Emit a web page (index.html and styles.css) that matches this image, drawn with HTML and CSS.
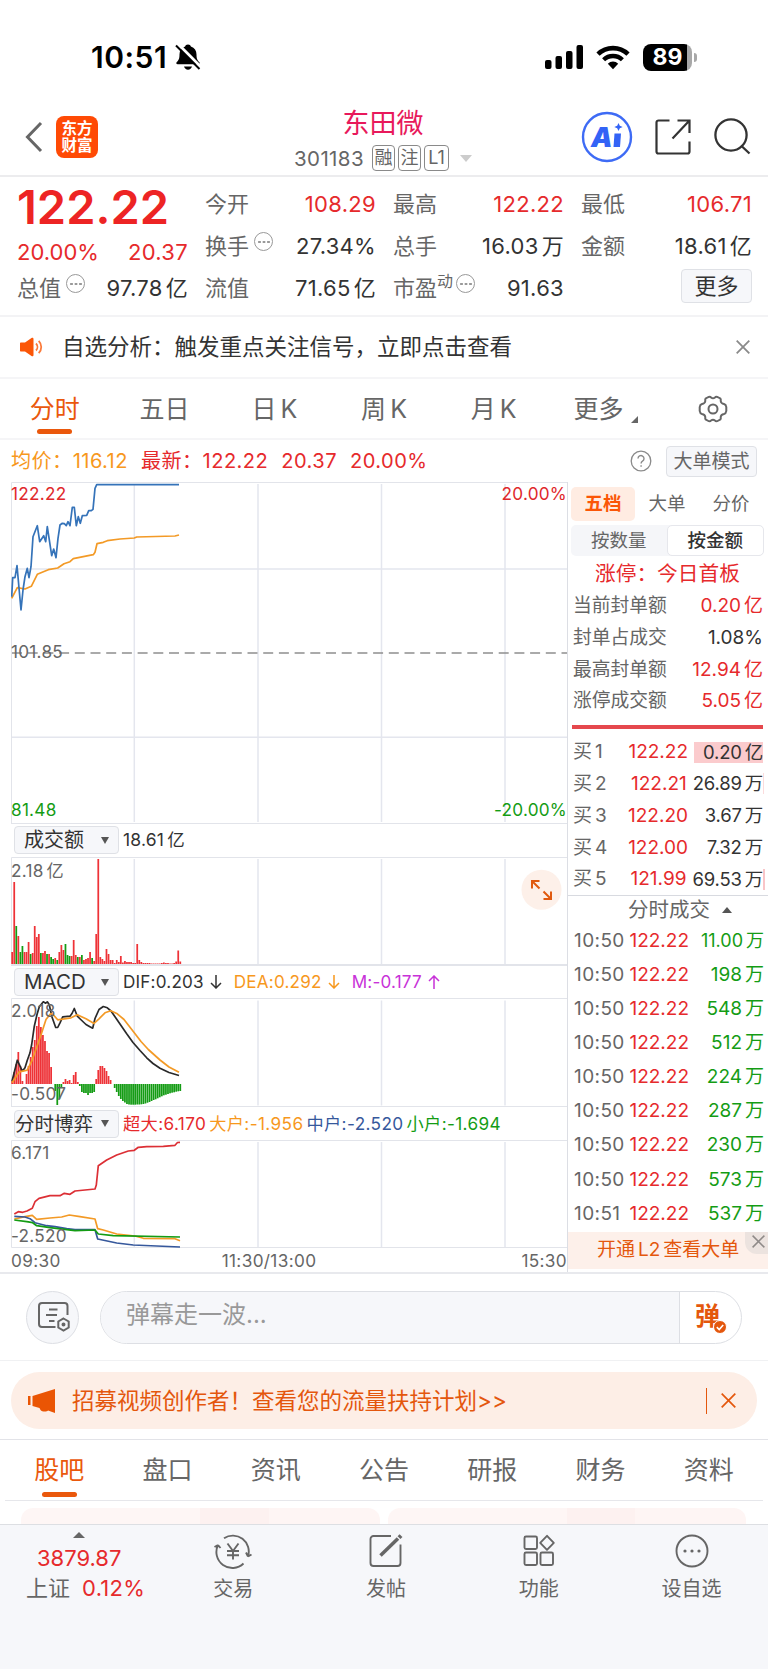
FILE: index.html
```html
<!DOCTYPE html>
<html lang="zh-CN">
<head>
    <meta charset="UTF-8">
    <meta name="viewport" content="width=device-width, initial-scale=1.0">
    <title>东田微 301183</title>
    <link rel="stylesheet" href="styles.css">
</head>
<body>

    <!-- Status bar -->
    <div class="status-bar">
        <div class="status-time">
            <span>10:51</span>
            <svg width="26" height="28" viewBox="0 0 26 28">
                <path d="M13 1.500c1.600 0 2.600.8 2.900 2C19.600 4.600 21.500 7.600 21.500 11.500c0 4.500 1 5.900 2.700 7.500.9.900.6 2.300-.9 2.300H2.700c-1.500 0-1.800-1.400-.9-2.300 1.700-1.600 2.700-3 2.700-7.500 0-3.900 1.900-6.900 5.600-8 .3-1.200 1.300-2 2.900-2z" fill="#000"/>
                <path d="M9 23.500h8c-.6 2-2 3.200-4 3.200s-3.400-1.200-4-3.200z" fill="#000"/>
                <path d="M2.500 .5L26 24" stroke="#fff" stroke-width="3"/>
                <path d="M1 2.500L24.500 26" stroke="#000" stroke-width="2"/>
            </svg>
        </div>
        <div class="status-icons">
            <svg width="38" height="25" viewBox="0 0 38 25">
                <rect x="0" y="15" width="6.500" height="9" rx="2"/>
                <rect x="10.500" y="11" width="6.500" height="13" rx="2"/>
                <rect x="21" y="6" width="6.500" height="18" rx="2"/>
                <rect x="31.500" y="0" width="6.500" height="24" rx="2"/>
            </svg>
            <svg width="34" height="25" viewBox="0 0 34 25">
                <path d="M2 9.200a21.500 21.500 0 0 1 30 0" fill="none" stroke="#000" stroke-width="4.600"/>
                <path d="M7.600 14.800a13.500 13.500 0 0 1 18.800 0" fill="none" stroke="#000" stroke-width="4.300"/>
                <path d="M11.800 18.700a7.500 7.500 0 0 1 10.400 0L17 24.200z"/>
            </svg>
            <div class="battery"><span>89</span></div>
        </div>
    </div>

    <!-- Header -->
    <header class="header">
        <div class="header-left">
            <svg width="18" height="32" viewBox="0 0 18 32"><path d="M16 2L2.500 16 16 30" fill="none" stroke="#666" stroke-width="3"/></svg>
            <div class="logo">东方<br>财富</div>
        </div>
        <div class="header-center">
            <h1>东田微</h1>
            <div class="stock-code">
                <span class="code">301183</span>
                <span class="tag">融</span>
                <span class="tag">注</span>
                <span class="tag tag-l1">L1</span>
                <svg class="code-caret" width="12" height="7" viewBox="0 0 12 7"><path d="M0 0h12L6 7z" fill="#ccc"/></svg>
            </div>
        </div>
        <div class="header-right">
            <svg width="52" height="52" viewBox="0 0 52 52">
                <circle cx="26" cy="26" r="24" fill="#fff" stroke="#3e6bf5" stroke-width="2.400"/>
                <text x="10" y="35.500" class="ai-text">A</text>
                <path d="M33.500 22.500h6.500l-1 13.500h-6.500z" fill="#3363f6"/>
                <path d="M37.500 12l1.300 2.700 2.900 1.300-2.900 1.300L37.500 20l-1.300-2.700-2.900-1.300 2.900-1.300z" fill="#3363f6"/>
            </svg>
            <svg width="36" height="36" viewBox="0 0 36 36" fill="none" stroke="#333" stroke-width="2.200">
                <path d="M14.500 1.500H3.500a2 2 0 0 0-2 2v29a2 2 0 0 0 2 2h29a2 2 0 0 0 2-2V22.500M22.500 1.500h12v12.500M34 2L17.500 19.500"/>
            </svg>
            <svg width="38" height="38" viewBox="0 0 38 38" fill="none" stroke="#333" stroke-width="2.300">
                <circle cx="18" cy="17" r="15.600"/>
                <path d="M28 27.500l8.500 8"/>
            </svg>
        </div>
    </header>

    <!-- Quote -->
    <section class="quote">
        <div class="quote-col">
            <div class="price">122.22</div>
            <div class="quote-row change red"><span>20.00%</span><span>20.37</span></div>
            <div class="quote-row"><span class="label">总值<i class="dots"></i></span><span>97.78<b>亿</b></span></div>
        </div>
        <div class="quote-col">
            <div class="quote-row"><span class="label">今开</span><span class="red">108.29</span></div>
            <div class="quote-row"><span class="label">换手<i class="dots"></i></span><span>27.34%</span></div>
            <div class="quote-row"><span class="label">流值</span><span>71.65<b>亿</b></span></div>
        </div>
        <div class="quote-col">
            <div class="quote-row"><span class="label">最高</span><span class="red">122.22</span></div>
            <div class="quote-row"><span class="label">总手</span><span>16.03<b>万</b></span></div>
            <div class="quote-row"><span class="label">市盈<small>动</small><i class="dots dots-tight"></i></span><span>91.63</span></div>
        </div>
        <div class="quote-col">
            <div class="quote-row"><span class="label">最低</span><span class="red">106.71</span></div>
            <div class="quote-row"><span class="label">金额</span><span>18.61<b>亿</b></span></div>
            <div class="quote-row quote-more"><button class="btn-more">更多</button></div>
        </div>
    </section>

    <!-- Notice -->
    <div class="notice">
        <svg class="notice-icon" width="24" height="20" viewBox="0 0 24 20">
            <path d="M1 5.500h4L11.500 1c1-.7 2-.2 2 1v16c0 1.200-1 1.700-2 1L5 14.500H1c-.6 0-1-.4-1-1v-7c0-.6.4-1 1-1z" fill="#fb5607"/>
            <path d="M16 6.500a5 5 0 0 1 0 7M18.700 3.800a8.800 8.800 0 0 1 0 12.400" fill="none" stroke="#fb7a3a" stroke-width="1.800"/>
        </svg>
        <span class="notice-text">自选分析：触发重点关注信号，立即点击查看</span>
        <svg width="14" height="14" viewBox="0 0 14 14"><path d="M.7.700l12.600 12.600M13.300.700L.7 13.300" stroke="#8a8a8a" stroke-width="1.800"/></svg>
    </div>

    <!-- Period tabs -->
    <nav class="tabs period-tabs">
        <a class="active">分时</a>
        <a>五日</a>
        <a>日<span>K</span></a>
        <a>周<span>K</span></a>
        <a>月<span>K</span></a>
        <a class="tab-more">更多<svg width="7" height="7" viewBox="0 0 7 7"><path d="M7 0v7H0z" fill="#666"/></svg></a>
        <a>
            <svg class="gear" width="30" height="30" viewBox="0 0 30 30" fill="none" stroke="#666" stroke-width="2" stroke-linejoin="round">
                <path d="M9.500 3.500Q12 2 13 3.500Q15 5 17 3.500Q18 2 20.500 3.500L22.500 4.700Q23 5.500 22.700 7Q23 9.500 26 10Q28 10.500 28.300 13V17Q28 19.500 26 20Q23 20.500 22.700 23Q23 24.500 22.500 25.300L20.500 26.500Q18 28 17 26.500Q15 25 13 26.500Q12 28 9.500 26.500L7.500 25.300Q7 24.500 7.300 23Q7 20.500 4 20Q2 19.500 1.700 17V13Q2 10.500 4 10Q7 9.500 7.300 7Q7 5.500 7.500 4.700Z"/>
                <circle cx="15" cy="15" r="4.500"/>
            </svg>
        </a>
    </nav>

    <!-- Average / latest price -->
    <div class="summary">
        <span class="orange">均价：116.12</span>
        <span class="red">最新：122.22</span>
        <span class="red">20.37</span>
        <span class="red">20.00%</span>
        <svg class="help" width="22" height="22" viewBox="0 0 22 22">
            <circle cx="11" cy="11" r="9.800" fill="none" stroke="#8a8a8a" stroke-width="1.300"/>
            <path d="M8 8.500a3 3 0 1 1 4.500 2.700c-1 .6-1.400 1-1.400 2.300M11.100 15.200v1.600" fill="none" stroke="#8a8a8a" stroke-width="1.400"/>
        </svg>
        <button class="btn-mode">大单模式</button>
    </div>

    <main class="board">
        <!-- Charts -->
        <div class="charts">
            <svg class="chart chart-price" viewBox="11 482 556 341">
                <path class="grid" d="M134.300 484v338M258 484v338M381.500 484v338M505 484v338M11 569h556M11 737.200h556"/>
                <path class="frame" d="M567 482.500H11.500V823"/>
                <path d="M12 653H567" stroke="#8f8f8f" stroke-width="1.600" stroke-dasharray="10 5.700"/>
                <polyline class="line orange-line" points="11.700,598.300 17.300,587.700 25,589 31.300,586.300 37.300,574.300 48.300,569.700 57.700,568 64,563.700 70,561.700 73.300,558.700 93.300,554.700 95,552.300 97,543.700 103.300,542.300 107.300,540.700 120,539 134.300,538 136.700,537 175,536 179,535"/>
                <polyline class="line blue-line" points="11.700,596.700 12.700,577.700 15,577.700 17,565.700 19,588 21,610 23,590 25,576.700 27.300,568.300 29,577.700 31,566.700 33,536.700 37.300,525.700 39.700,541.700 43.700,535.700 45.700,541.700 47.300,526.700 51.700,555.700 53.700,549 56,557.700 58,538.300 60,525 62.300,523.300 64.300,523.700 66.300,525.700 68,521.700 70,525.700 72.300,507.300 74.300,507.300 76.300,525.700 78.300,516.700 80.300,523.300 82.300,515.700 86.700,515.300 88.700,510.700 91.300,510.700 93,509.300 95,488.300 96.700,484.700 179,484.700"/>
                <text x="11" y="500" class="t-red">122.22</text>
                <text x="11" y="658" class="t-gray">101.85</text>
                <text x="11" y="816" class="t-green">81.48</text>
                <text x="567" y="500" class="t-red t-end">20.00%</text>
                <text x="567" y="816" class="t-green t-end">-20.00%</text>
            </svg>

            <div class="indicator">
                <div class="select"><span>成交额</span><i></i></div>
                <span>18.61<b>亿</b></span>
            </div>
            <svg class="chart chart-small" viewBox="11 857 556 108">
                <path class="grid" d="M134.300 859v105M258 859v105M381.500 859v105M505 859v105"/>
                <path class="frame" d="M567 857.500H11.500V964.500H567"/>
                <g id="volume"></g>
                <text x="11" y="876.500" class="t-gray">2.18<tspan dx="3">亿</tspan></text>
                <circle cx="541.500" cy="889.700" r="20" fill="#fdf0e9"/>
                <path d="M532 888.500V881h7.500M532.500 881.500l7 7M551 891.500v7.500h-7.500M550.500 898.500l-7-7" fill="none" stroke="#e05a10" stroke-width="2"/>
            </svg>

            <div class="indicator">
                <div class="select select-macd"><span>MACD</span><i></i></div>
                <span class="macd">DIF:0.203 <svg class="arrow" viewBox="0 0 12 14"><path d="M6 0v13M1 8l5 5 5-5"/></svg></span>
                <span class="macd orange">DEA:0.292 <svg class="arrow" viewBox="0 0 12 14"><path d="M6 0v13M1 8l5 5 5-5"/></svg></span>
                <span class="macd purple">M:-0.177 <svg class="arrow" viewBox="0 0 12 14"><path d="M6 14V1M1 6l5-5 5 5"/></svg></span>
            </div>
            <svg class="chart chart-small" viewBox="11 998.500 556 108">
                <path class="grid" d="M134.300 1001v105M258 1001v105M381.500 1001v105M505 1001v105"/>
                <path class="frame" d="M567 999H11.500V1106.500"/>
                <g id="macd"></g>
                <polyline class="line black-line" points="12,1081.700 17.300,1060.700 22.300,1071.700 25,1068.300 27.300,1060.700 30,1053.300 31.700,1045 34.300,1026.700 37,1015 39.300,1007.300 43.300,1002.300 45.700,1003.700 47.300,1002.300 49.300,1005.300 51.700,1016.700 55.700,1028 57.700,1028 60,1023.300 62.700,1017.300 70,1016.700 72,1014 74.300,1009 77.300,1016.700 80.700,1020 86,1025 89,1026.700 92.700,1028.700 95,1019 99,1010 103.300,1007 107.300,1008.300 111,1011.500 115,1017.300 126.700,1034.300 133,1043 140,1051 146.700,1058.300 153,1064 160,1068.700 169,1073 179,1076"/>
                <polyline class="line orange-line" points="12,1083.300 19.300,1072.300 27.300,1070.700 31.700,1061.700 38.300,1043.300 41.700,1033.300 46,1020 50.700,1014 53.300,1015.300 57.700,1020.300 71,1018.300 77.300,1015.300 86,1019.300 94,1024 99,1019.300 105,1013.300 110.700,1011.300 117.300,1014.300 124,1020 133.300,1032 141,1042 148.300,1050 160,1060.500 169,1067.500 179,1072.700"/>
                <text x="11" y="1017.500" class="t-gray">2.018</text>
                <text x="11" y="1100" class="t-gray">-0.507</text>
            </svg>

            <div class="indicator">
                <div class="select select-game"><span>分时博弈</span><i></i></div>
                <span class="game red">超大:6.170</span>
                <span class="game orange">大户:-1.956</span>
                <span class="game blue">中户:-2.520</span>
                <span class="game green">小户:-1.694</span>
            </div>
            <svg class="chart chart-small" viewBox="11 1140 556 108">
                <path class="grid" d="M134.300 1142v105M258 1142v105M381.500 1142v105M505 1142v105"/>
                <path class="frame" d="M567 1140.500H11.500V1247.500H567"/>
                <polyline class="line orange-line" points="14.300,1219 25,1216.700 32.300,1215.300 36.700,1219.300 50,1218 61.700,1217 69.300,1215 80,1216.700 95,1219 97.700,1228.700 103.300,1230 116.700,1234 135,1236 143.300,1238.300 175,1238.700 180,1240.700"/>
                <polyline class="line navy-line" points="14.300,1216.300 25,1217 30,1218.700 35,1222.700 46.700,1225.700 55,1226.700 66.700,1228.700 75,1229.700 95,1229.700 97.700,1239 116.700,1243 133.300,1245 180,1247"/>
                <polyline class="line green-line" points="14.300,1220 26.700,1221.700 32.700,1222.700 36.700,1225.700 50,1227.700 75,1230.700 95,1230 98.300,1234 113.300,1235.700 180,1237"/>
                <polyline class="line red-line" points="14.300,1214 18.300,1211.700 22.700,1212.300 27,1211 32.300,1208.300 35,1201.700 39,1198.300 50,1195.700 60,1195.700 64.300,1193.300 70,1194.300 75,1191 95,1189 96.300,1185 98.300,1165.700 106.700,1160 116.700,1155 128.300,1151 134.300,1150.300 138.300,1147.300 146.700,1146.700 163.300,1146.300 175,1145.300 177.500,1142.500 180,1142.300"/>
                <text x="11" y="1159.300" class="t-gray">6.171</text>
                <text x="11" y="1241.700" class="t-gray">-2.520</text>
            </svg>
            <div class="time-axis"><span>09:30</span><span class="noon">11:30/13:00</span><span>15:30</span></div>
        </div>

        <!-- Order book -->
        <aside class="side">
            <div class="side-tabs"><a class="active">五档</a><a>大单</a><a>分价</a></div>
            <div class="toggle"><span>按数量</span><span class="on">按金额</span></div>
            <div class="limit red">涨停：今日首板</div>
            <ul class="stats">
                <li><span>当前封单额</span><em class="red">0.20<b>亿</b></em></li>
                <li><span>封单占成交</span><em>1.08%</em></li>
                <li><span>最高封单额</span><em class="red">12.94<b>亿</b></em></li>
                <li><span>涨停成交额</span><em class="red">5.05<b>亿</b></em></li>
            </ul>
            <div class="divider"></div>
            <ul class="bids">
                <li><span>买<b>1</b></span><span class="red">122.22</span><em class="fill">0.20<b>亿</b></em></li>
                <li><span>买<b>2</b></span><span class="red">122.21</span><em class="edge-light">26.89<b>万</b></em></li>
                <li><span>买<b>3</b></span><span class="red">122.20</span><em>3.67<b>万</b></em></li>
                <li><span>买<b>4</b></span><span class="red">122.00</span><em>7.32<b>万</b></em></li>
                <li><span>买<b>5</b></span><span class="red">121.99</span><em class="edge">69.53<b>万</b></em></li>
            </ul>
            <div class="deals-title">分时成交<svg width="10" height="6" viewBox="0 0 10 6"><path d="M5 0l5 6H0z" fill="#555"/></svg></div>
            <ul class="deals">
                <li><span>10:50</span><span class="red">122.22</span><em class="narrow">11.00<b>万</b></em></li>
                <li><span>10:50</span><span class="red">122.22</span><em>198<b>万</b></em></li>
                <li><span>10:50</span><span class="red">122.22</span><em>548<b>万</b></em></li>
                <li><span>10:50</span><span class="red">122.22</span><em>512<b>万</b></em></li>
                <li><span>10:50</span><span class="red">122.22</span><em>224<b>万</b></em></li>
                <li><span>10:50</span><span class="red">122.22</span><em>287<b>万</b></em></li>
                <li><span>10:50</span><span class="red">122.22</span><em>230<b>万</b></em></li>
                <li><span>10:50</span><span class="red">122.22</span><em>573<b>万</b></em></li>
                <li><span>10:51</span><span class="red">122.22</span><em>537<b>万</b></em></li>
            </ul>
            <div class="level2">
                开通<b>L2</b><b>查看大单</b>
                <span class="level2-close"><svg width="13" height="13" viewBox="0 0 13 13"><path d="M.6.600l11.800 11.800M12.400.600L.6 12.400" stroke="#8f8a88" stroke-width="1.500"/></svg></span>
            </div>
        </aside>
    </main>

    <!-- Comment bar -->
    <div class="comment">
        <div class="comment-set">
            <svg width="34" height="32" viewBox="0 0 34 32" fill="none" stroke="#666" stroke-width="2">
                <path d="M18.500 26H5a3 3 0 0 1-3-3V5a3 3 0 0 1 3-3h22.500a3 3 0 0 1 3 3v9"/>
                <path d="M12 8.500h8.500M9 14h11M12 20h5.500"/>
                <path d="M26.500 17.500l5.200 3v6l-5.200 3-5.200-3v-6z"/>
                <circle cx="26.500" cy="23.500" r="1" fill="#666"/>
            </svg>
        </div>
        <div class="comment-box">
            <span class="placeholder">弹幕走一波...</span>
            <span class="danmu">弹<svg width="14" height="14" viewBox="0 0 14 14"><circle cx="7" cy="7" r="6.500" fill="#e4570d" stroke="#fff"/><path d="M3.800 7.200l2.400 2.300 4-4.500" fill="none" stroke="#fff" stroke-width="1.600"/></svg></span>
        </div>
    </div>

    <!-- Promo -->
    <div class="promo-wrap">
        <div class="promo">
            <svg width="27" height="24" viewBox="0 0 27 24" fill="#ea5504">
                <path d="M0 7h2.500v9H0zM4.500 7L27 0v24l-7-2.500c-1 1.500-6 1.500-7.500-.5l-1-2L4.500 17z"/>
            </svg>
            <span class="promo-text">招募视频创作者！查看您的流量扶持计划&gt;&gt;</span>
            <i class="promo-line"></i>
            <svg width="15" height="15" viewBox="0 0 15 15"><path d="M.7.700l13.600 13.600M14.300.700L.7 14.300" stroke="#e4570d" stroke-width="1.700"/></svg>
        </div>
    </div>

    <!-- Content tabs -->
    <nav class="tabs content-tabs">
        <a class="active">股吧</a>
        <a>盘口</a>
        <a>资讯</a>
        <a>公告</a>
        <a>研报</a>
        <a>财务</a>
        <a>资料</a>
    </nav>
    <div class="cards"><div></div><div></div></div>

    <!-- Bottom bar -->
    <footer class="bottom">
        <div class="index">
            <svg width="12" height="6" viewBox="0 0 12 6"><path d="M6 0l6 6H0z" fill="#666"/></svg>
            <div class="red">3879.87</div>
            <div><span>上证</span><span class="red">0.12%</span></div>
        </div>
        <a>
            <svg width="40" height="36" viewBox="0 0 40 36" fill="none" stroke="#666" stroke-width="1.900">
                <path d="M11 5.200A16 16 0 0 1 35 23.500M35 23.500l3.500-2M35 23.500l-2-4M30.500 30.500A16 16 0 0 1 5 12M5 12l-3.500 2M5 12l2.500 3"/>
                <path d="M14.500 10.500l5.500 7.500 5.500-7.500M20 18v8.500M14 18h12M14 22.200h12"/>
            </svg>
            交易
        </a>
        <a>
            <svg width="36" height="36" viewBox="0 0 36 36" fill="none" stroke="#666" stroke-width="1.900">
                <path d="M23 3H5.500a3 3 0 0 0-3 3v24a3 3 0 0 0 3 3h24a3 3 0 0 0 3-3V11.500"/>
                <path d="M12.500 22.500L30 5.500" stroke-width="3.500"/>
                <path d="M31 4.700l2-2" stroke-width="4"/>
            </svg>
            发帖
        </a>
        <a>
            <svg width="36" height="36" viewBox="0 0 36 36" fill="none" stroke="#666" stroke-width="1.900">
                <rect x="3.500" y="3.500" width="12.500" height="12.500" rx="1.500"/>
                <rect x="3.500" y="19.500" width="12.500" height="12.500" rx="1.500"/>
                <rect x="19.500" y="19.500" width="12.500" height="12.500" rx="1.500"/>
                <path d="M26 2.800l6.800 7-6.800 7-6.800-7z" stroke-linejoin="round"/>
            </svg>
            功能
        </a>
        <a>
            <svg width="36" height="36" viewBox="0 0 36 36" fill="none" stroke="#666" stroke-width="1.900">
                <circle cx="18" cy="18" r="15.500"/>
                <g fill="#666" stroke="none"><circle cx="11" cy="18" r="1.600"/><circle cx="18" cy="18" r="1.600"/><circle cx="25" cy="18" r="1.600"/></g>
            </svg>
            设自选
        </a>
    </footer>

    <script>
        const STEP = 2.05;
        const RED = '#ee3237';
        const GREEN = '#149c14';

        // Turnover per minute, negative = falling minute
        const volume = [
            12, 82, -38, 28, -12, -18, 12, 12, 22, -10, 11, 38, 27, 30, -11, 11, 13, -10, 10, -7,
            -5, 6, -4, 12, 19, 14, -20, -9, -8, 8, 24, 9, -7, 7, -9, 4, 5, 6, 12, -6,
            3, 30, 105, 7, 5, 3, 15, 10, 4, 4, 1, 4, 2, 8, 1.5, 3, 2, 2, 2, 1,
            1, 20, 4, 2, 1, 1, 1, 1, .5, .5, .5, .5, .5, 1, 1.5, 1, 1, .5, .5, 1,
            2.5, 13.5, 2.5
        ];

        const macd = [
            3, 12, 20, 32, 18, 3, 0, 10, 18, 27, 37, 44, 58, 67, 57, 49, 43, 33, 31, 17,
            0, -7, -21, -15, -3, 2, 5, 3, 4, 1, 9, 12, 2, -2, -8, -9, -9, -11, -9, -9,
            -8, 5, 14, 18, 18, 16, 13, 8, 4, 0, -4, -8, -12, -15, -17, -18.5, -20, -20.5, -20.7, -20.7,
            -20.7, -20.5, -20.5, -20.3, -20, -19.5, -18.7, -18, -17, -16, -15.3, -14.3, -13.3, -12.3, -11.3, -10.7, -10, -9.3, -8.7, -8.3,
            -7.7, -7.3, -7
        ];

        function bar(x, y, h, color) {
            return `<rect x="${x.toFixed(2)}" y="${y}" width="1.75" height="${h}" fill="${color}"/>`;
        }

        document.getElementById('volume').innerHTML = volume
            .map((v, i) => bar(11.3 + i * STEP, 964 - Math.abs(v), Math.abs(v), v < 0 ? GREEN : RED))
            .join('');

        document.getElementById('macd').innerHTML = macd
            .map((v, i) => bar(11.3 + i * STEP, v < 0 ? 1084.5 : 1084.5 - v, Math.abs(v), v < 0 ? GREEN : RED))
            .join('');
    </script>
</body>
</html>
```

FILE: styles.css
```css
* {
    box-sizing: border-box;
}

body {
    margin: 0;
    width: 768px;
    height: 1669px;
    overflow: hidden;
    background-color: #fff;
    color: #333;
    font-family: Inter, "Noto Sans CJK SC", sans-serif;
    font-size: 22px;
    display: flex;
    flex-direction: column;
}

body > * {
    flex-shrink: 0;
}

svg {
    display: block;
    flex-shrink: 0;
}

ul {
    list-style: none;
    margin: 0;
    padding: 0;
}

b,
em,
i {
    font-weight: inherit;
    font-style: normal;
}

b {
    margin-left: 3px;
}

button {
    font-family: inherit;
    padding: 0;
    background-color: #f6f7fa;
    border: 1px solid #dfe1e6;
    border-radius: 4px;
}

.red { color: #e62a2c; }
.orange { color: #f7981d; }
.green { color: #149c14; }
.blue { color: #36589c; }
.purple { color: #c832d8; }

/* Status bar */
.status-bar {
    height: 96px;
    padding: 18px 71px 0 91px;
    display: flex;
    align-items: center;
    justify-content: space-between;
}

.status-time {
    display: flex;
    align-items: center;
    gap: 8px;
    font-size: 30px;
    font-weight: 600;
    letter-spacing: 0.5px;
    line-height: 40px;
    color: #000;
}

.status-icons {
    display: flex;
    align-items: center;
    gap: 13px;
}

.battery {
    position: relative;
    width: 49px;
    height: 27px;
    margin-right: 5px;
    border-radius: 8px;
    background: linear-gradient(90deg, #000 44px, #a8a8a8 44px);
    color: #fff;
    font-size: 23px;
    font-weight: 700;
    line-height: 27px;
    text-align: center;
}

.battery::after {
    content: "";
    position: absolute;
    right: -5px;
    top: 9px;
    width: 3px;
    height: 9px;
    border-radius: 0 4px 4px 0;
    background-color: #a8a8a8;
}

/* Header */
.header {
    height: 81px;
    padding: 0 17px 0 25px;
    border-bottom: 2px solid #ececee;
    display: grid;
    grid-template-columns: 1fr auto 1fr;
}

.header-left {
    display: flex;
    align-items: center;
    gap: 13px;
    padding-top: 3px;
}

.logo {
    width: 42px;
    height: 42px;
    padding-top: 4px;
    border-radius: 8px;
    background-color: #ff4a05;
    color: #fff;
    font-size: 15.5px;
    font-weight: 700;
    line-height: 17px;
    text-align: center;
}

.header-center {
    display: flex;
    flex-direction: column;
    align-items: center;
    padding-top: 9px;
    margin-left: -10px;
}

h1 {
    margin: 0;
    color: #e8195b;
    font-size: 27px;
    font-weight: 400;
    line-height: 37px;
}

.stock-code {
    display: flex;
    align-items: center;
    height: 26px;
    margin-top: 3px;
    color: #666;
    font-size: 20.5px;
}

.code {
    margin-right: 8px;
    letter-spacing: 0.4px;
}

.tag {
    width: 23px;
    height: 26px;
    margin-right: 3px;
    border: 1.5px solid #8a8a8a;
    border-radius: 4px;
    font-size: 18px;
    line-height: 24px;
    text-align: center;
}

.tag-l1 {
    width: 25px;
}

.code-caret {
    margin-left: 8px;
}

.header-right {
    display: flex;
    align-items: center;
    justify-content: flex-end;
    gap: 22px;
    padding-top: 3px;
}

.ai-text {
    font-size: 27px;
    font-weight: 900;
    font-style: italic;
    fill: #3363f6;
}

/* Quote */
.quote {
    height: 140px;
    padding: 6px 15px 0 17px;
    border-bottom: 2px solid #f3f3f5;
    display: flex;
    gap: 17px;
}

.quote-col {
    width: 171px;
}

.quote-row {
    height: 42px;
    line-height: 42px;
    display: flex;
    justify-content: space-between;
    white-space: nowrap;
}

.quote-row > span:last-child {
    letter-spacing: 0.3px;
}

.price {
    height: 50px;
    color: #ed2424;
    font-size: 47px;
    font-weight: 600;
    line-height: 47px;
}

.change {
    height: 34px;
    line-height: 38px;
}

.label {
    display: flex;
    color: #666;
}

.label small {
    font-size: 16px;
    line-height: 29px;
}

.dots {
    width: 19px;
    height: 19px;
    margin: 7px 0 0 5px;
    padding: 0 1.5px;
    border: 1.5px solid #999;
    border-radius: 50%;
    background: radial-gradient(circle, #999 1.2px, transparent 1.5px) center / 4.5px 16px repeat-x;
    background-clip: content-box;
}

.dots-tight {
    margin-left: 3px;
}

.quote-more {
    justify-content: flex-end;
    align-items: center;
}

.btn-more {
    width: 71px;
    height: 34px;
    margin-bottom: 4px;
    color: #333;
    font-size: 22px;
    line-height: 30px;
}

/* Notice */
.notice {
    height: 62px;
    padding: 0 18px 0 20px;
    border-bottom: 2px solid #f5f5f7;
    display: flex;
    align-items: center;
}

.notice-text {
    flex: 1;
    margin-left: 18px;
    font-size: 22.5px;
    line-height: 40px;
}

/* Tabs */
.tabs {
    display: flex;
    color: #666;
    font-size: 25px;
    line-height: 56px;
}

.tabs a {
    flex: 1;
    display: flex;
    align-items: center;
    justify-content: center;
    position: relative;
}

.tabs .active {
    color: #ea580c;
}

.tabs .active::after {
    content: "";
    position: absolute;
    bottom: 4px;
    width: 35px;
    height: 5px;
    border-radius: 3px;
    background-color: #ea580c;
}

.period-tabs {
    height: 61px;
    border-bottom: 2px solid #f5f5f7;
}

.period-tabs span {
    margin-left: 4px;
}

.tab-more svg {
    margin: 22px -5px 0 8px;
}

/* Summary */
.summary {
    height: 42px;
    padding: 0 11px;
    display: flex;
    align-items: center;
    gap: 13px;
    font-size: 20.1px;
    letter-spacing: 0.45px;
    line-height: 43px;
}

.help {
    margin-left: auto;
    margin-right: 1px;
}

.btn-mode {
    width: 91px;
    height: 31px;
    color: #666;
    font-size: 19px;
    line-height: 27px;
}

/* Board */
.board {
    height: 792px;
    border-bottom: 2px solid #e8e9ed;
    display: flex;
}

.charts {
    width: 568px;
    padding-left: 11px;
    border-right: 1px solid #dcdee4;
}

.chart {
    width: 556px;
    font-size: 17.2px;
    letter-spacing: 0.25px;
}

.chart-price {
    height: 341px;
}

.chart-small {
    height: 108px;
}

.grid {
    fill: none;
    stroke: #e4e6ee;
    stroke-width: 1.5;
}

.frame {
    fill: none;
    stroke: #e2e4ea;
}

.line {
    fill: none;
    stroke-width: 1.7;
    stroke-linejoin: round;
}

.blue-line { stroke: #3573b9; }
.orange-line { stroke: #f39a26; }
.black-line { stroke: #2a2a2a; }
.navy-line { stroke: #36589c; }
.green-line { stroke: #149c14; }
.red-line { stroke: #dc2f35; }

.t-red { fill: #e0282b; }
.t-gray { fill: #666; }
.t-green { fill: #149c14; }
.t-end { text-anchor: end; }

.indicator {
    height: 33.7px;
    padding-left: 3px;
    border-top: 1px solid #e2e4ea;
    display: flex;
    align-items: center;
    font-size: 17.5px;
    letter-spacing: 0.2px;
    line-height: 32px;
    white-space: nowrap;
}

.select {
    width: 105px;
    height: 28px;
    margin-right: 4px;
    padding: 0 9px;
    border: 1px solid #dfe1e6;
    border-radius: 4px;
    background-color: #f6f7fa;
    display: flex;
    align-items: center;
    justify-content: space-between;
    font-size: 20px;
    letter-spacing: 0;
    line-height: 26px;
}

.select i {
    border: 4.5px solid transparent;
    border-top: 7px solid #555;
    border-bottom: 0;
}

.select-macd {
    font-size: 20.5px;
}

.select-game {
    padding-left: 0;
    font-size: 19.5px;
}

.macd {
    display: flex;
    align-items: center;
    gap: 6px;
    margin-right: 12px;
    font-size: 17.1px;
}

.arrow {
    width: 12px;
    height: 14px;
    fill: none;
    stroke: currentColor;
    stroke-width: 1.5;
}

.game {
    margin-right: 3px;
    font-size: 17.2px;
    letter-spacing: 0.38px;
}

.time-axis {
    display: flex;
    justify-content: space-between;
    color: #666;
    font-size: 17.2px;
    letter-spacing: 0.35px;
    line-height: 26px;
}

.noon {
    margin-right: 44px;
}

/* Side */
.side {
    width: 200px;
    color: #666;
    font-size: 19px;
}

.side-tabs {
    display: flex;
    height: 34px;
    margin: 5px 0 4px 3px;
    font-size: 18.5px;
    line-height: 33px;
    text-align: center;
}

.side-tabs a {
    width: 64px;
    border-radius: 5px;
}

.side-tabs .active {
    background-color: #ffece2;
    color: #fb5607;
    font-weight: 700;
}

.toggle {
    display: flex;
    height: 31px;
    margin: 0 4px 0 3px;
    border-radius: 5px;
    background-color: #f5f6f9;
    font-size: 18.5px;
    line-height: 30px;
    text-align: center;
}

.toggle span {
    flex: 1;
}

.toggle .on {
    border: 1px solid #e6e7ec;
    border-radius: 5px;
    background-color: #fff;
    color: #333;
    font-weight: 500;
    line-height: 28px;
}

.limit {
    height: 34px;
    padding-left: 27px;
    font-size: 20.7px;
    line-height: 35px;
}

.side li {
    display: flex;
    justify-content: space-between;
    padding: 0 5px;
    white-space: nowrap;
}

.stats li {
    height: 31.8px;
    line-height: 32px;
}

.stats span {
    font-size: 18.8px;
}

.stats em,
.bids em {
    color: #333;
}

.stats .red {
    color: #e62a2c;
}

.divider {
    height: 4px;
    margin: 8px 5px 7px 4px;
    background-color: #e5484d;
}

.bids li {
    height: 31.8px;
    line-height: 31.8px;
    align-items: center;
}

.bids li > span:first-child,
.deals li > span:first-child {
    width: 54px;
}

.deals li > span:first-child {
    letter-spacing: 0.4px;
}

.bids li > .red,
.deals li > .red {
    width: 61px;
    text-align: right;
}

.bids em,
.deals em {
    flex: 1;
    text-align: right;
}

.bids em {
    margin-left: 6px;
    font-size: 18.5px;
    line-height: 21px;
    letter-spacing: -0.2px;
}

.bids .fill {
    background-color: #fbcbcd;
}

.bids .edge-light {
    box-shadow: 1px 0 #fbdcdd;
}

.bids .edge {
    box-shadow: 2px 0 #f9c5c8;
}

.deals-title {
    height: 29.5px;
    border-top: 1px solid #d8dae0;
    display: flex;
    align-items: center;
    padding-left: 60px;
    gap: 12px;
    font-size: 20.5px;
    line-height: 28px;
}

.side .deals li {
    height: 34.13px;
    padding: 0 4px 0 6px;
    line-height: 32px;
}

.deals em {
    color: #149c14;
}

.deals .narrow {
    font-size: 18px;
}

.level2 {
    position: relative;
    height: 37px;
    padding-left: 29px;
    background-color: #fdf0ea;
    color: #e4570d;
    font-size: 19px;
    line-height: 35px;
    white-space: nowrap;
}

.level2-close {
    position: absolute;
    top: 0;
    right: 0;
    width: 23px;
    height: 22px;
    padding: 3px 0 0 7px;
    border-bottom-left-radius: 12px;
    background-color: #ece3df;
}

/* Comment bar */
.comment {
    height: 87px;
    padding: 0 26px;
    border-bottom: 1px solid #f0f1f3;
    display: flex;
    align-items: center;
    justify-content: space-between;
}

.comment-set {
    width: 53px;
    height: 53px;
    padding-left: 2px;
    border: 1px solid #dddfe4;
    border-radius: 50%;
    background-color: #f6f7fa;
    display: flex;
    align-items: center;
    justify-content: center;
}

.comment-box {
    width: 642px;
    height: 53px;
    border: 1px solid #dddfe4;
    border-radius: 27px;
    overflow: hidden;
    display: flex;
}

.placeholder {
    flex: 1;
    padding-left: 25px;
    background-color: #f6f7fa;
    color: #999;
    font-size: 24px;
    line-height: 46px;
}

.danmu {
    position: relative;
    width: 62px;
    padding-left: 15px;
    border-left: 1px solid #dddfe4;
    color: #e4570d;
    font-size: 25px;
    font-weight: 700;
    line-height: 49px;
}

.danmu svg {
    position: absolute;
    left: 33px;
    top: 28px;
}

/* Promo */
.promo-wrap {
    height: 79px;
    padding: 11px 11px 0;
    border-bottom: 1px solid #e2e3e8;
}

.promo {
    height: 57px;
    padding: 0 21px 0 17px;
    border-radius: 29px;
    background-color: #fdeee6;
    color: #e4570d;
    display: flex;
    align-items: center;
}

.promo-text {
    flex: 1;
    margin-left: 17px;
    font-size: 22.5px;
    line-height: 56px;
}

.promo-line {
    width: 1.5px;
    height: 26px;
    margin-right: 14px;
    background-color: #e4570d;
}

/* Content tabs */
.content-tabs {
    height: 61px;
    margin: 0 5px;
    border-bottom: 1px solid #e6e7eb;
    line-height: 59px;
}

.content-tabs .active::after {
    bottom: 3px;
}

.cards {
    height: 23px;
    padding: 7px 22px 0 21px;
    overflow: hidden;
    display: flex;
    gap: 8px;
}

.cards div {
    flex: 1;
    height: 60px;
    border-radius: 12px;
    background: linear-gradient(90deg, #fef6f5 50%, #fdf1f0 50%, #fdf1f0 69%, #fef5f4 69%);
}

/* Bottom bar */
.bottom {
    height: 145px;
    border-top: 1px solid #dddfe3;
    background-color: #f6f7fa;
    color: #666;
    display: flex;
}

.bottom a {
    width: 153px;
    padding-top: 8px;
    display: flex;
    flex-direction: column;
    align-items: center;
    font-size: 20px;
    line-height: 41px;
}

.index {
    width: 157px;
    padding: 7px 0 0 26px;
}

.index svg {
    margin-left: 47px;
}

.index div {
    height: 31px;
    line-height: 32px;
    display: flex;
    gap: 12px;
}

.index > div:last-child .red {
    letter-spacing: 0.3px;
}

.index > .red {
    height: 34px;
    padding-left: 11px;
    line-height: 40px;
}
```
